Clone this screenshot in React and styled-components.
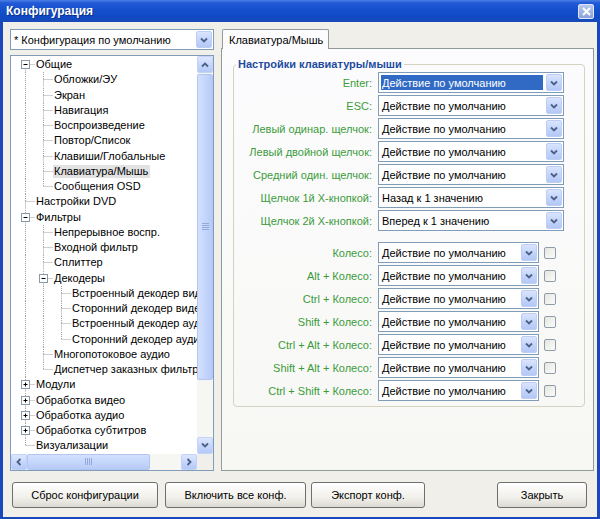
import React from "react";
import styled, { createGlobalStyle } from "styled-components";

const GlobalStyle = createGlobalStyle`
  html, body {
    margin: 0;
    padding: 0;
    background: #fff;
  }
  body {
    font-family: "Liberation Sans", Arial, sans-serif;
    font-size: 11px;
    color: #000;
  }
  * {
    box-sizing: border-box;
  }
`;

const ROW_H = 15.25;

const tree = [
  { t: "Общие", l: 0, e: "open" },
  { t: "Обложки/ЭУ", l: 1 },
  { t: "Экран", l: 1 },
  { t: "Навигация", l: 1 },
  { t: "Воспроизведение", l: 1 },
  { t: "Повтор/Список", l: 1 },
  { t: "Клавиши/Глобальные", l: 1 },
  { t: "Клавиатура/Мышь", l: 1, sel: true },
  { t: "Сообщения OSD", l: 1 },
  { t: "Настройки DVD", l: 0 },
  { t: "Фильтры", l: 0, e: "open" },
  { t: "Непрерывное воспр.", l: 1 },
  { t: "Входной фильтр", l: 1 },
  { t: "Сплиттер", l: 1 },
  { t: "Декодеры", l: 1, e: "open" },
  { t: "Встроенный декодер видео", l: 2 },
  { t: "Сторонний декодер видео", l: 2 },
  { t: "Встроенный декодер аудио", l: 2 },
  { t: "Сторонний декодер аудио", l: 2 },
  { t: "Многопотоковое аудио", l: 1 },
  { t: "Диспетчер заказных фильтров", l: 1 },
  { t: "Модули", l: 0, e: "closed" },
  { t: "Обработка видео", l: 0, e: "closed" },
  { t: "Обработка аудио", l: 0, e: "closed" },
  { t: "Обработка субтитров", l: 0, e: "closed" },
  { t: "Визуализации", l: 0 },
];

// does the item have a sibling further down at the same level
const hasLater = (i) => {
  for (let j = i + 1; j < tree.length; j++) {
    if (tree[j].l < tree[i].l) return false;
    if (tree[j].l === tree[i].l) return true;
  }
  return false;
};

const guidesFor = (i) => {
  const row = tree[i];
  const cols = [];
  for (let d = 0; d <= row.l; d++) {
    if (d < row.l) {
      let k = i - 1;
      while (k >= 0 && tree[k].l !== d) k--;
      cols.push({ pass: k >= 0 && hasLater(k) });
    } else {
      cols.push({ node: true, up: i > 0, down: hasLater(i), exp: row.e });
    }
  }
  return cols;
};

const keyRows = [
  { label: "Enter:", value: "Действие по умолчанию", sel: true },
  { label: "ESC:", value: "Действие по умолчанию" },
  { label: "Левый одинар. щелчок:", value: "Действие по умолчанию" },
  { label: "Левый двойной щелчок:", value: "Действие по умолчанию" },
  { label: "Средний один. щелчок:", value: "Действие по умолчанию" },
  { label: "Щелчок 1й X-кнопкой:", value: "Назад к 1 значению" },
  { label: "Щелчок 2й X-кнопкой:", value: "Вперед к 1 значению" },
];

const wheelRows = [
  "Колесо:",
  "Alt + Колесо:",
  "Ctrl + Колесо:",
  "Shift + Колесо:",
  "Ctrl + Alt + Колесо:",
  "Shift + Alt + Колесо:",
  "Ctrl + Shift + Колесо:",
];

const Window = styled.div`
  width: 600px;
  height: 519px;
  display: flex;
  flex-direction: column;
  background: #1a47bb;
`;

const TitleBar = styled.div`
  flex: none;
  height: 22px;
  display: flex;
  align-items: center;
  justify-content: space-between;
  padding: 0 6px;
  background: linear-gradient(
    180deg,
    #4a7fe6 0%,
    #2159d6 14%,
    #1550cc 45%,
    #1149c4 80%,
    #1a4bb8 100%
  );
`;

const Title = styled.span`
  color: #fff;
  font-weight: bold;
  font-size: 12px;
  text-shadow: 1px 1px 0 #0b2f86;
`;

const CloseBtn = styled.div`
  width: 16px;
  height: 15px;
  border: 1px solid #dfe7f8;
  border-radius: 2px;
  background: linear-gradient(180deg, #b8c9ef, #89a2dc);
  display: flex;
  align-items: center;
  justify-content: center;
`;

const Body = styled.div`
  flex: 1;
  margin: 0 3px 3px;
  background: #f0efea;
  display: flex;
  flex-direction: column;
  padding: 7px 3px 9px 7px;
`;

const Main = styled.div`
  flex: 1;
  display: flex;
  gap: 7px;
  min-height: 0;
`;

const LeftCol = styled.div`
  width: 204px;
  display: flex;
  flex-direction: column;
  gap: 5px;
`;

const Combo = styled.div`
  flex: none;
  width: ${(p) => p.w}px;
  height: 21px;
  border: 1px solid #7f9db9;
  background: #fff;
  display: flex;
  align-items: stretch;
`;

const ComboText = styled.div`
  flex: 1;
  display: flex;
  align-items: center;
  margin: 2px;
  padding-left: 1px;
  white-space: nowrap;
  overflow: hidden;
  background: ${(p) => (p.sel ? "#316ac5" : "transparent")};
  color: ${(p) => (p.sel ? "#fff" : "#000")};
`;

const ArrowBtn = styled.div`
  flex: none;
  width: 16px;
  margin: 1px;
  border: 1px solid #bccdf6;
  border-radius: 2px;
  background: linear-gradient(180deg, #dae4fd 0%, #c4d5fc 50%, #b4c8f6 100%);
  display: flex;
  align-items: center;
  justify-content: center;
`;

const TreeBox = styled.div`
  flex: 1;
  border: 1px solid #7f9db9;
  background: #fff;
  display: grid;
  grid-template-columns: 1fr 16px;
  grid-template-rows: 1fr 16px;
  min-height: 0;
`;

const Items = styled.div`
  overflow: hidden;
  padding: 1px 0 0 6px;
`;

const TreeRow = styled.div`
  height: ${ROW_H}px;
  display: flex;
  align-items: center;
  white-space: nowrap;
`;

const ItemLabel = styled.span`
  line-height: 13px;
  padding: 0 2px 0 1px;
  background: ${(p) => (p.sel ? "#e2e2e2" : "transparent")};
`;

const VScroll = styled.div`
  display: flex;
  flex-direction: column;
  background: #f6f6f2;
`;

const HScroll = styled.div`
  display: flex;
  background: #f6f6f2;
`;

const Corner = styled.div`
  background: #f0efea;
`;

const ScrollBtn = styled.div`
  flex: none;
  width: 16px;
  height: ${(p) => (p.tall ? 17 : 16)}px;
  border: 1px solid #c3d2f8;
  border-radius: 2px;
  background: linear-gradient(180deg, #dde7fe 0%, #c6d6fc 50%, #b5c9f6 100%);
  display: flex;
  align-items: center;
  justify-content: center;
`;

const Track = styled.div`
  flex: 1;
  display: flex;
  flex-direction: ${(p) => (p.vertical ? "column" : "row")};
  padding: ${(p) => (p.vertical ? "1px 0 0" : "0")};
`;

const Thumb = styled.div`
  flex: none;
  ${(p) => (p.vertical ? `height: ${p.size}px;` : `width: ${p.size}px;`)}
  border: 1px solid #b3c6f1;
  border-radius: 2px;
  background: linear-gradient(
    ${(p) => (p.vertical ? "90deg" : "180deg")},
    #d3e0fe 0%,
    #c4d5fc 55%,
    #b7caf6 100%
  );
  display: flex;
  align-items: center;
  justify-content: center;
`;

const RightCol = styled.div`
  flex: 1;
  display: flex;
  flex-direction: column;
  min-width: 0;
`;

const TabStrip = styled.div`
  flex: none;
  display: flex;
  padding-left: 1px;
`;

const Tab = styled.div`
  height: 20px;
  padding: 0 5px 0 6px;
  display: flex;
  align-items: center;
  border: 1px solid #919b9c;
  border-bottom: none;
  border-radius: 2px 2px 0 0;
  background: #fcfcfe;
  margin-bottom: -1px;
  position: relative;
  z-index: 1;
`;

const Panel = styled.div`
  flex: 1;
  border: 1px solid #919b9c;
  background: linear-gradient(180deg, #fcfcfe 0%, #f7f7f4 100%);
  padding: 9px 8px 0 11px;
`;

const Group = styled.fieldset`
  margin: 0;
  border: 1px solid #d5d2c2;
  border-radius: 4px;
  padding: 1px 17px 5px 0;
  min-width: 0;
  display: flex;
  flex-direction: column;
  gap: 2px;
`;

const Legend = styled.legend`
  margin-left: 2px;
  padding: 0 2px;
  line-height: 13px;
  font-weight: bold;
  color: #1d4c9e;
`;

const FieldRow = styled.div`
  display: flex;
  align-items: center;
  height: 21px;
  margin-top: ${(p) => (p.spaced ? 9 : 0)}px;
`;

const FieldLabel = styled.span`
  width: 138px;
  margin-right: 6px;
  text-align: right;
  white-space: nowrap;
  color: #3b9b3b;
`;

const Check = styled.div`
  width: 12px;
  height: 12px;
  margin-left: 5px;
  border: 1px solid #8f9cac;
  border-radius: 2px;
  background: linear-gradient(135deg, #e6e6e0, #fbfbf9);
`;

const Footer = styled.div`
  flex: none;
  margin-top: 11px;
  height: 26px;
  display: flex;
  padding: 0 7px 0 2px;
`;

const Button = styled.div`
  width: ${(p) => p.w}px;
  margin-left: ${(p) => (p.push ? "auto" : `${p.ml || 0}px`)};
  height: 26px;
  border: 1px solid #6f6f6f;
  border-radius: 3px;
  background: linear-gradient(180deg, #ffffff 0%, #f1f0eb 60%, #dcdad2 100%);
  display: flex;
  align-items: center;
  justify-content: center;
`;

const angles = { down: 0, up: 180, left: 90, right: -90 };

const Chevron = ({ dir = "down" }) => (
  <svg
    width="8"
    height="6"
    viewBox="0 0 8 6"
    style={{ transform: `rotate(${angles[dir]}deg)` }}
  >
    <path d="M1 1.5 L4 4.5 L7 1.5" fill="none" stroke="#4d6185" strokeWidth="1.8" />
  </svg>
);

const Grip = ({ vertical }) => (
  <svg width={vertical ? 7 : 8} height={vertical ? 8 : 7}>
    {[0.5, 2.5, 4.5, 6.5].map((v) =>
      vertical ? (
        <line key={v} x1="0" x2="7" y1={v} y2={v} stroke="#93a9dc" />
      ) : (
        <line key={v} x1={v} x2={v} y1="0" y2="7" stroke="#93a9dc" />
      )
    )}
  </svg>
);

const Guide = ({ col }) => {
  const cx = 8.5;
  const cy = 7.5;
  const dot = { stroke: "#a0a0a0", strokeDasharray: "1 1" };
  return (
    <svg width="18" height={ROW_H} style={{ flex: "none" }}>
      {col.pass && <line x1={cx} x2={cx} y1="0" y2={ROW_H} {...dot} />}
      {col.node && col.up && <line x1={cx} x2={cx} y1="0" y2={cy} {...dot} />}
      {col.node && col.down && <line x1={cx} x2={cx} y1={cy} y2={ROW_H} {...dot} />}
      {col.node && <line x1={cx} x2="18" y1={cy} y2={cy} {...dot} />}
      {col.node && col.exp && (
        <g>
          <rect x="4.5" y="3.5" width="8" height="8" fill="#fff" stroke="#8b9aab" />
          <line x1="6.5" x2="10.5" y1="7.5" y2="7.5" stroke="#000" />
          {col.exp === "closed" && (
            <line x1="8.5" x2="8.5" y1="5.5" y2="9.5" stroke="#000" />
          )}
        </g>
      )}
    </svg>
  );
};

const Select = ({ w, value, sel }) => (
  <Combo w={w}>
    <ComboText sel={sel}>{value}</ComboText>
    <ArrowBtn>
      <Chevron />
    </ArrowBtn>
  </Combo>
);

export default function App() {
  return (
    <>
      <GlobalStyle />
      <Window>
        <TitleBar>
          <Title>Конфигурация</Title>
          <CloseBtn>
            <svg width="9" height="9" viewBox="0 0 9 9">
              <path d="M1 1 L8 8 M8 1 L1 8" stroke="#fff" strokeWidth="2" />
            </svg>
          </CloseBtn>
        </TitleBar>
        <Body>
          <Main>
            <LeftCol>
              <Select w={204} value="* Конфигурация по умолчанию" />
              <TreeBox>
                <Items>
                  {tree.map((row, i) => (
                    <TreeRow key={row.t}>
                      {guidesFor(i).map((col, d) => (
                        <Guide key={d} col={col} />
                      ))}
                      <ItemLabel sel={row.sel}>{row.t}</ItemLabel>
                    </TreeRow>
                  ))}
                </Items>
                <VScroll>
                  <ScrollBtn tall>
                    <Chevron dir="up" />
                  </ScrollBtn>
                  <Track vertical>
                    <Thumb vertical size={306}>
                      <Grip vertical />
                    </Thumb>
                  </Track>
                  <ScrollBtn tall>
                    <Chevron dir="down" />
                  </ScrollBtn>
                </VScroll>
                <HScroll>
                  <ScrollBtn>
                    <Chevron dir="left" />
                  </ScrollBtn>
                  <Track>
                    <Thumb size={123}>
                      <Grip />
                    </Thumb>
                  </Track>
                  <ScrollBtn>
                    <Chevron dir="right" />
                  </ScrollBtn>
                </HScroll>
                <Corner />
              </TreeBox>
            </LeftCol>
            <RightCol>
              <TabStrip>
                <Tab>Клавиатура/Мышь</Tab>
              </TabStrip>
              <Panel>
                <Group>
                  <Legend>Настройки клавиатуры/мыши</Legend>
                  {keyRows.map((r) => (
                    <FieldRow key={r.label}>
                      <FieldLabel>{r.label}</FieldLabel>
                      <Select w={186} value={r.value} sel={r.sel} />
                    </FieldRow>
                  ))}
                  {wheelRows.map((label, i) => (
                    <FieldRow key={label} spaced={i === 0}>
                      <FieldLabel>{label}</FieldLabel>
                      <Select w={161} value="Действие по умолчанию" />
                      <Check />
                    </FieldRow>
                  ))}
                </Group>
              </Panel>
            </RightCol>
          </Main>
          <Footer>
            <Button w={146}>Сброс конфигурации</Button>
            <Button w={141} ml={7}>Включить все конф.</Button>
            <Button w={114} ml={5}>Экспорт конф.</Button>
            <Button w={90} push>Закрыть</Button>
          </Footer>
        </Body>
      </Window>
    </>
  );
}
